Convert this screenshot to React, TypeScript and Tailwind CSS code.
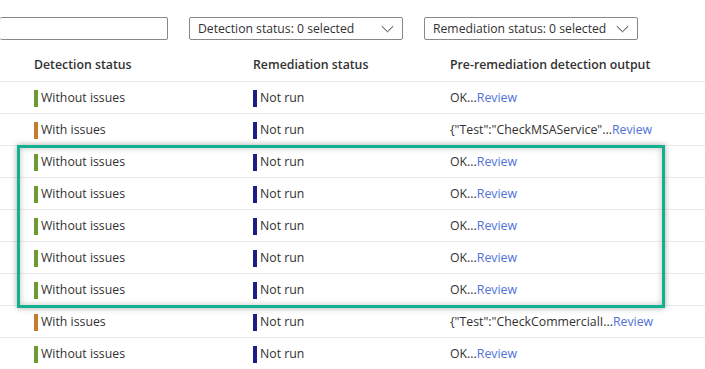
import React from 'react';

type Row = {
  detection: 'ok' | 'issues';
  output: string;
};

const rows: Row[] = [
  { detection: 'ok', output: 'OK...' },
  { detection: 'issues', output: '{"Test":"CheckMSAService"...' },
  { detection: 'ok', output: 'OK...' },
  { detection: 'ok', output: 'OK...' },
  { detection: 'ok', output: 'OK...' },
  { detection: 'ok', output: 'OK...' },
  { detection: 'ok', output: 'OK...' },
  { detection: 'issues', output: '{"Test":"CheckCommercialI...' },
  { detection: 'ok', output: 'OK...' },
];

const Chevron = () => (
  <svg width="13" height="8" viewBox="0 0 13 8" fill="none" className="shrink-0">
    <path d="M0.8 1.2l5.7 5.6 5.7-5.6" stroke="#323130" strokeWidth="1" />
  </svg>
);

const FilterPill = ({ label, width }: { label: string; width: string }) => (
  <div
    className={`flex h-[23px] items-center justify-between rounded-[2px] border border-[#8a8886] pl-[8px] pr-[8px] ${width}`}
  >
    <span className="whitespace-nowrap pt-[2px] text-[12.2px] text-[#323130]">{label}</span>
    <Chevron />
  </div>
);

const StatusBar = ({ color }: { color: string }) => (
  <span className={`mr-[3px] inline-block h-[17px] w-[4px] ${color}`} />
);

const App: React.FC = () => {
  return (
    <main
      className="relative h-[369px] w-[705px] overflow-hidden bg-white text-[#323130]"
      style={{ fontFamily: '"Open Sans", "Noto Sans", sans-serif' }}
    >
      {/* Filters */}
      <div className="flex items-center gap-[21px] pt-[17px]">
        <div className="h-[23px] w-[168px] rounded-[2px] border border-[#8a8886] border-l-0" />
        <FilterPill label="Detection status: 0 selected" width="w-[214px]" />
        <FilterPill label="Remediation status: 0 selected" width="w-[214px]" />
      </div>

      {/* Header */}
      <div className="mt-[9px] flex h-[33px] items-center border-b border-[#edebe9] pl-[34px] text-[12.3px] font-semibold whitespace-nowrap">
        <div className="w-[219px]">Detection status</div>
        <div className="w-[197px]">Remediation status</div>
        <div>Pre-remediation detection output</div>
      </div>

      {/* Rows */}
      {rows.map((r, i) => (
        <div
          key={i}
          className="flex h-[32px] items-center border-b border-[#edebe9] pl-[34px] pt-[1px] text-[12.3px] whitespace-nowrap"
        >
          <div className="flex w-[219px] items-center">
            <StatusBar color={r.detection === 'ok' ? 'bg-[#6e9b2f]' : 'bg-[#c57c2c]'} />
            {r.detection === 'ok' ? 'Without issues' : 'With issues'}
          </div>
          <div className="flex w-[197px] items-center">
            <StatusBar color="bg-[#1b1f84]" />
            Not run
          </div>
          <div>
            {r.output}
            <span className="text-[#5070d8]">Review</span>
          </div>
        </div>
      ))}

      {/* Annotation highlight */}
      <div className="pointer-events-none absolute left-[17px] top-[145px] h-[163px] w-[648px] border-[3px] border-[#12b08f] shadow-[0_0_6px_rgba(0,0,0,0.35),inset_0_0_6px_rgba(0,0,0,0.25)]" />
    </main>
  );
};

export default App;
